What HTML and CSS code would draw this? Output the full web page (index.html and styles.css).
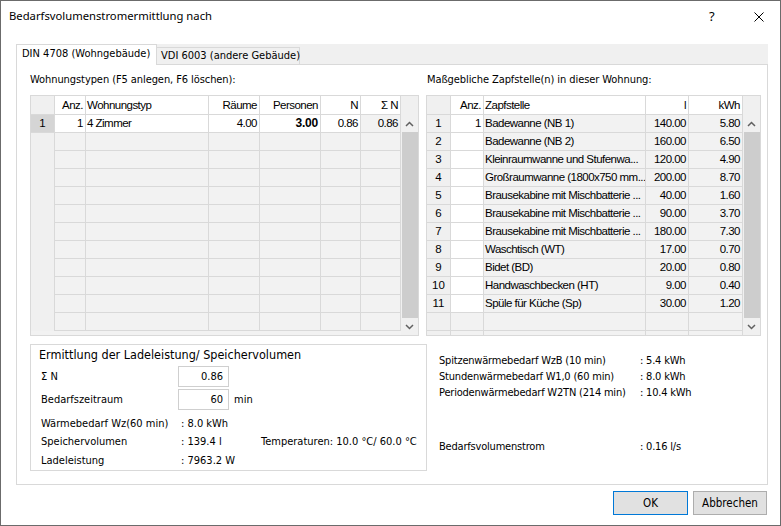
FILE: index.html
```html
<!DOCTYPE html>
<html lang="de">
<head>
  <meta charset="UTF-8" />
  <title>Bedarfsvolumenstromermittlung nach</title>
  <link rel="stylesheet" href="styles.css">
</head>
<body>
  <div class="window">
    <div class="titlebar">
      <span class="title">Bedarfsvolumenstromermittlung nach</span>
      <span class="help">?</span>
      <svg class="close" width="10" height="10" viewBox="0 0 10 10">
        <path d="M0.5 0.5 L9.5 9.5 M9.5 0.5 L0.5 9.5" stroke="#000" stroke-width="1" fill="none"/>
      </svg>
    </div>

    <div class="tabs">
      <div class="tab active">DIN 4708 (Wohngebäude)</div>
      <div class="tab">VDI 6003 (andere Gebäude)</div>
    </div>

    <div class="panel">
      <div class="top">
        <div class="col col-left">
          <div class="caption">Wohnungstypen (F5 anlegen, F6 löschen):</div>
          <div class="gridbox">
            <div class="grid grid-left">
              <div class="c corner"></div><div class="c hd">Anz.</div><div class="c hd left">Wohnungstyp</div><div class="c hd">Räume</div><div class="c hd">Personen</div><div class="c hd">N</div><div class="c hd">Σ N</div>
              <div class="c rh sel">1</div><div class="c w">1</div><div class="c w left">4 Zimmer</div><div class="c w">4.00</div><div class="c w bold">3.00</div><div class="c w">0.86</div><div class="c">0.86</div>
              <div class="c rh none"></div><div class="c"></div><div class="c"></div><div class="c"></div><div class="c"></div><div class="c"></div><div class="c"></div>
              <div class="c rh none"></div><div class="c"></div><div class="c"></div><div class="c"></div><div class="c"></div><div class="c"></div><div class="c"></div>
              <div class="c rh none"></div><div class="c"></div><div class="c"></div><div class="c"></div><div class="c"></div><div class="c"></div><div class="c"></div>
              <div class="c rh none"></div><div class="c"></div><div class="c"></div><div class="c"></div><div class="c"></div><div class="c"></div><div class="c"></div>
              <div class="c rh none"></div><div class="c"></div><div class="c"></div><div class="c"></div><div class="c"></div><div class="c"></div><div class="c"></div>
              <div class="c rh none"></div><div class="c"></div><div class="c"></div><div class="c"></div><div class="c"></div><div class="c"></div><div class="c"></div>
              <div class="c rh none"></div><div class="c"></div><div class="c"></div><div class="c"></div><div class="c"></div><div class="c"></div><div class="c"></div>
              <div class="c rh none"></div><div class="c"></div><div class="c"></div><div class="c"></div><div class="c"></div><div class="c"></div><div class="c"></div>
              <div class="c rh none"></div><div class="c"></div><div class="c"></div><div class="c"></div><div class="c"></div><div class="c"></div><div class="c"></div>
              <div class="c rh none"></div><div class="c"></div><div class="c"></div><div class="c"></div><div class="c"></div><div class="c"></div><div class="c"></div>
              <div class="c rh none"></div><div class="c"></div><div class="c"></div><div class="c"></div><div class="c"></div><div class="c"></div><div class="c"></div>
            </div>
            <div class="scroll">
              <div class="scroll-head"></div>
              <div class="arrow"><svg width="9" height="6" viewBox="0 0 9 6"><path d="M1 5 L4.5 1.5 L8 5" stroke="#606060" stroke-width="1.5" fill="none"/></svg></div>
              <div class="thumb"></div>
              <div class="arrow"><svg width="9" height="6" viewBox="0 0 9 6"><path d="M1 1 L4.5 4.5 L8 1" stroke="#606060" stroke-width="1.5" fill="none"/></svg></div>
            </div>
          </div>
        </div>

        <div class="col col-right">
          <div class="caption caption-right">Maßgebliche Zapfstelle(n) in dieser Wohnung:</div>
          <div class="gridbox">
            <div class="grid grid-right">
              <div class="c corner"></div><div class="c hd">Anz.</div><div class="c hd left">Zapfstelle</div><div class="c hd">l</div><div class="c hd">kWh</div>
              <div class="c rh">1</div><div class="c w">1</div><div class="c left">Badewanne (NB 1)</div><div class="c">140.00</div><div class="c">5.80</div>
              <div class="c rh">2</div><div class="c w"></div><div class="c left">Badewanne (NB 2)</div><div class="c">160.00</div><div class="c">6.50</div>
              <div class="c rh">3</div><div class="c w"></div><div class="c left">Kleinraumwanne und Stufenwa...</div><div class="c">120.00</div><div class="c">4.90</div>
              <div class="c rh">4</div><div class="c w"></div><div class="c left">Großraumwanne (1800x750 mm...</div><div class="c">200.00</div><div class="c">8.70</div>
              <div class="c rh">5</div><div class="c w"></div><div class="c left">Brausekabine mit Mischbatterie ...</div><div class="c">40.00</div><div class="c">1.60</div>
              <div class="c rh">6</div><div class="c w"></div><div class="c left">Brausekabine mit Mischbatterie ...</div><div class="c">90.00</div><div class="c">3.70</div>
              <div class="c rh">7</div><div class="c w"></div><div class="c left">Brausekabine mit Mischbatterie ...</div><div class="c">180.00</div><div class="c">7.30</div>
              <div class="c rh">8</div><div class="c w"></div><div class="c left">Waschtisch (WT)</div><div class="c">17.00</div><div class="c">0.70</div>
              <div class="c rh">9</div><div class="c w"></div><div class="c left">Bidet (BD)</div><div class="c">20.00</div><div class="c">0.80</div>
              <div class="c rh">10</div><div class="c w"></div><div class="c left">Handwaschbecken (HT)</div><div class="c">9.00</div><div class="c">0.40</div>
              <div class="c rh">11</div><div class="c w"></div><div class="c left">Spüle für Küche (Sp)</div><div class="c">30.00</div><div class="c">1.20</div>
              <div class="c rh"></div><div class="c"></div><div class="c"></div><div class="c"></div><div class="c"></div>
              <div class="c rh"></div><div class="c"></div><div class="c"></div><div class="c"></div><div class="c"></div>
            </div>
            <div class="scroll">
              <div class="scroll-head"></div>
              <div class="arrow"><svg width="9" height="6" viewBox="0 0 9 6"><path d="M1 5 L4.5 1.5 L8 5" stroke="#606060" stroke-width="1.5" fill="none"/></svg></div>
              <div class="thumb"></div>
              <div class="arrow"><svg width="9" height="6" viewBox="0 0 9 6"><path d="M1 1 L4.5 4.5 L8 1" stroke="#606060" stroke-width="1.5" fill="none"/></svg></div>
            </div>
          </div>
        </div>
      </div>

      <div class="bottom">
        <div class="group">
          <div class="group-title">Ermittlung der Ladeleistung/ Speichervolumen</div>
          <div class="field-row">
            <span class="field-label">Σ N</span>
            <span class="field">0.86</span>
          </div>
          <div class="field-row">
            <span class="field-label">Bedarfszeitraum</span>
            <span class="field">60</span>
            <span class="unit">min</span>
          </div>
          <div class="results">
            <span>Wärmebedarf Wz(60 min)</span><span>: 8.0 kWh</span><span></span>
            <span>Speichervolumen</span><span>: 139.4 l</span><span>Temperaturen: 10.0 °C/ 60.0 °C</span>
            <span>Ladeleistung</span><span>: 7963.2 W</span><span></span>
          </div>
        </div>

        <div class="info">
          <div class="line"><span class="info-label">Spitzenwärmebedarf WzB (10 min)</span><span>: 5.4 kWh</span></div>
          <div class="line"><span class="info-label">Stundenwärmebedarf W1,0 (60 min)</span><span>: 8.0 kWh</span></div>
          <div class="line"><span class="info-label">Periodenwärmebedarf W2TN (214 min)</span><span>: 10.4 kWh</span></div>
          <div class="line line-sep"><span class="info-label">Bedarfsvolumenstrom</span><span>: 0.16 l/s</span></div>
        </div>
      </div>
    </div>

    <div class="buttons">
      <div class="btn btn-ok">OK</div>
      <div class="btn btn-cancel">Abbrechen</div>
    </div>
  </div>
</body>
</html>
```

FILE: styles.css
```css
body {
  margin: 0;
  font-family: "DejaVu Sans Condensed", "DejaVu Sans", sans-serif;
  font-size: 11px;
  color: #000;
  background: #fff;
}

.window {
  width: 781px;
  height: 526px;
  box-sizing: border-box;
  border: 1px solid #6b6b6b;
  background: #fff;
}

/* title bar */
.titlebar {
  height: 43px;
  box-sizing: border-box;
  display: flex;
  align-items: flex-start;
  padding: 7px 0 0 8px;
}

.title {
  font-family: "Noto Sans", sans-serif;
  font-size: 11.25px;
  line-height: 16px;
}

.help {
  margin-left: auto;
  width: 8px;
  margin-right: 35px;
  font-family: "Noto Sans", sans-serif;
  font-size: 13px;
  line-height: 17px;
  position: relative;
  left: -2px;
}

.close {
  margin-top: 4px;
  margin-right: 16px;
}

/* tabs */
.tabs {
  display: flex;
  align-items: flex-end;
  height: 20px;
  margin: 0 12px 0 15px;
  background: #f0f0f0;
  border-bottom: 1px solid #d9d9d9;
}

.tab {
  height: 17px;
  width: 143px;
  box-sizing: border-box;
  padding-left: 4px;
  line-height: 16px;
  border-top: 1px solid #d9d9d9;
  border-right: 1px solid #d9d9d9;
  white-space: nowrap;
}

.tab.active {
  position: relative;
  height: 21px;
  width: 141px;
  margin-bottom: -1px;
  padding-left: 5px;
  line-height: 18px;
  background: #fff;
  border: 1px solid #d9d9d9;
  border-bottom: none;
}

/* panel */
.panel {
  height: 420px;
  box-sizing: border-box;
  margin: 0 12px 0 15px;
  border: 1px solid #d9d9d9;
  border-top: none;
  padding: 8px 6px 0 13px;
}

.top {
  display: flex;
  gap: 7px;
}

.col-left {
  width: 389px;
}

.col-right {
  width: 335px;
}

.caption {
  line-height: 14px;
  margin-bottom: 8px;
  white-space: nowrap;
  letter-spacing: -0.08px;
}

.caption-right {
  padding-left: 1px;
}

/* grids */
.gridbox {
  display: flex;
  height: 241px;
  box-sizing: border-box;
  border: 1px solid #d9d9d9;
}

.grid {
  display: grid;
  grid-template-rows: 19px;
  grid-auto-rows: 18px;
  align-content: start;
  height: 239px;
  overflow: hidden;
  background: #f2f2f2;
}

.grid-left {
  grid-template-columns: 24px 31px 123px 51px 61px 40px 40px;
}

.grid-right {
  grid-template-columns: 24px 33px 162px 43px 54px;
}

.c {
  box-sizing: border-box;
  border-right: 1px solid #d9d9d9;
  border-bottom: 1px solid #d9d9d9;
  padding: 0 2px 0 1px;
  font-family: "Liberation Sans", Arial, sans-serif;
  font-size: 11.5px;
  letter-spacing: -0.52px;
  line-height: 17px;
  text-align: right;
  white-space: nowrap;
  overflow: hidden;
}

.c.left {
  text-align: left;
}

.c.hd {
  background: #fff;
  line-height: 18px;
}

.c.corner {
  background: #f0f0f0;
}

.c.w {
  background: #fff;
}

.c.bold {
  font-weight: bold;
  font-size: 12px;
  letter-spacing: -0.2px;
}

.c.rh {
  text-align: center;
  padding: 0;
  letter-spacing: 0;
  background: #f0f0f0;
}

.c.rh.sel {
  background: #d5d5d5;
}

.c.rh.none {
  border-bottom: none;
}

.scroll {
  width: 17px;
  display: flex;
  flex-direction: column;
  background: #f0f0f0;
}

.scroll-head {
  height: 19px;
}

.arrow {
  height: 17px;
  display: flex;
  align-items: center;
  justify-content: center;
}

.thumb {
  flex: 1;
  margin-left: 1px;
  background: #cdcdcd;
}

/* lower part */
.bottom {
  display: flex;
  margin-top: 8px;
}

.group {
  width: 397px;
  height: 127px;
  box-sizing: border-box;
  border: 1px solid #d9d9d9;
  padding: 2px 0 0 8px;
}

.group-title {
  font-size: 12.5px;
  line-height: 16px;
  margin-bottom: 3px;
  white-space: nowrap;
}

.field-row {
  display: flex;
  align-items: center;
  height: 21px;
  margin-bottom: 2px;
  padding-left: 2px;
}

.field-label {
  width: 137px;
}

.field {
  width: 51px;
  height: 21px;
  box-sizing: border-box;
  border: 1px solid #cfcfcf;
  padding-right: 5px;
  text-align: right;
  line-height: 19px;
}

.unit {
  margin-left: 5px;
}

.results {
  display: grid;
  grid-template-columns: 140px 80px auto;
  grid-auto-rows: 18.5px;
  align-items: center;
  margin-top: 4px;
  padding-left: 2px;
  white-space: nowrap;
}

.info {
  margin: 9px 0 0 12px;
  letter-spacing: -0.2px;
}

.line {
  display: flex;
  line-height: 16px;
  white-space: nowrap;
}

.info-label {
  width: 201px;
}

.line-sep {
  margin-top: 38px;
}

/* buttons */
.buttons {
  display: flex;
  justify-content: flex-end;
  gap: 5px;
  margin: 6px 13px 0 0;
}

.btn {
  height: 24px;
  box-sizing: border-box;
  border: 1px solid #adadad;
  background: #e1e1e1;
  font-size: 11.5px;
  line-height: 22px;
  text-align: center;
}

.btn-ok {
  width: 75px;
  border-color: #0078d7;
}

.btn-cancel {
  width: 74px;
}
```
